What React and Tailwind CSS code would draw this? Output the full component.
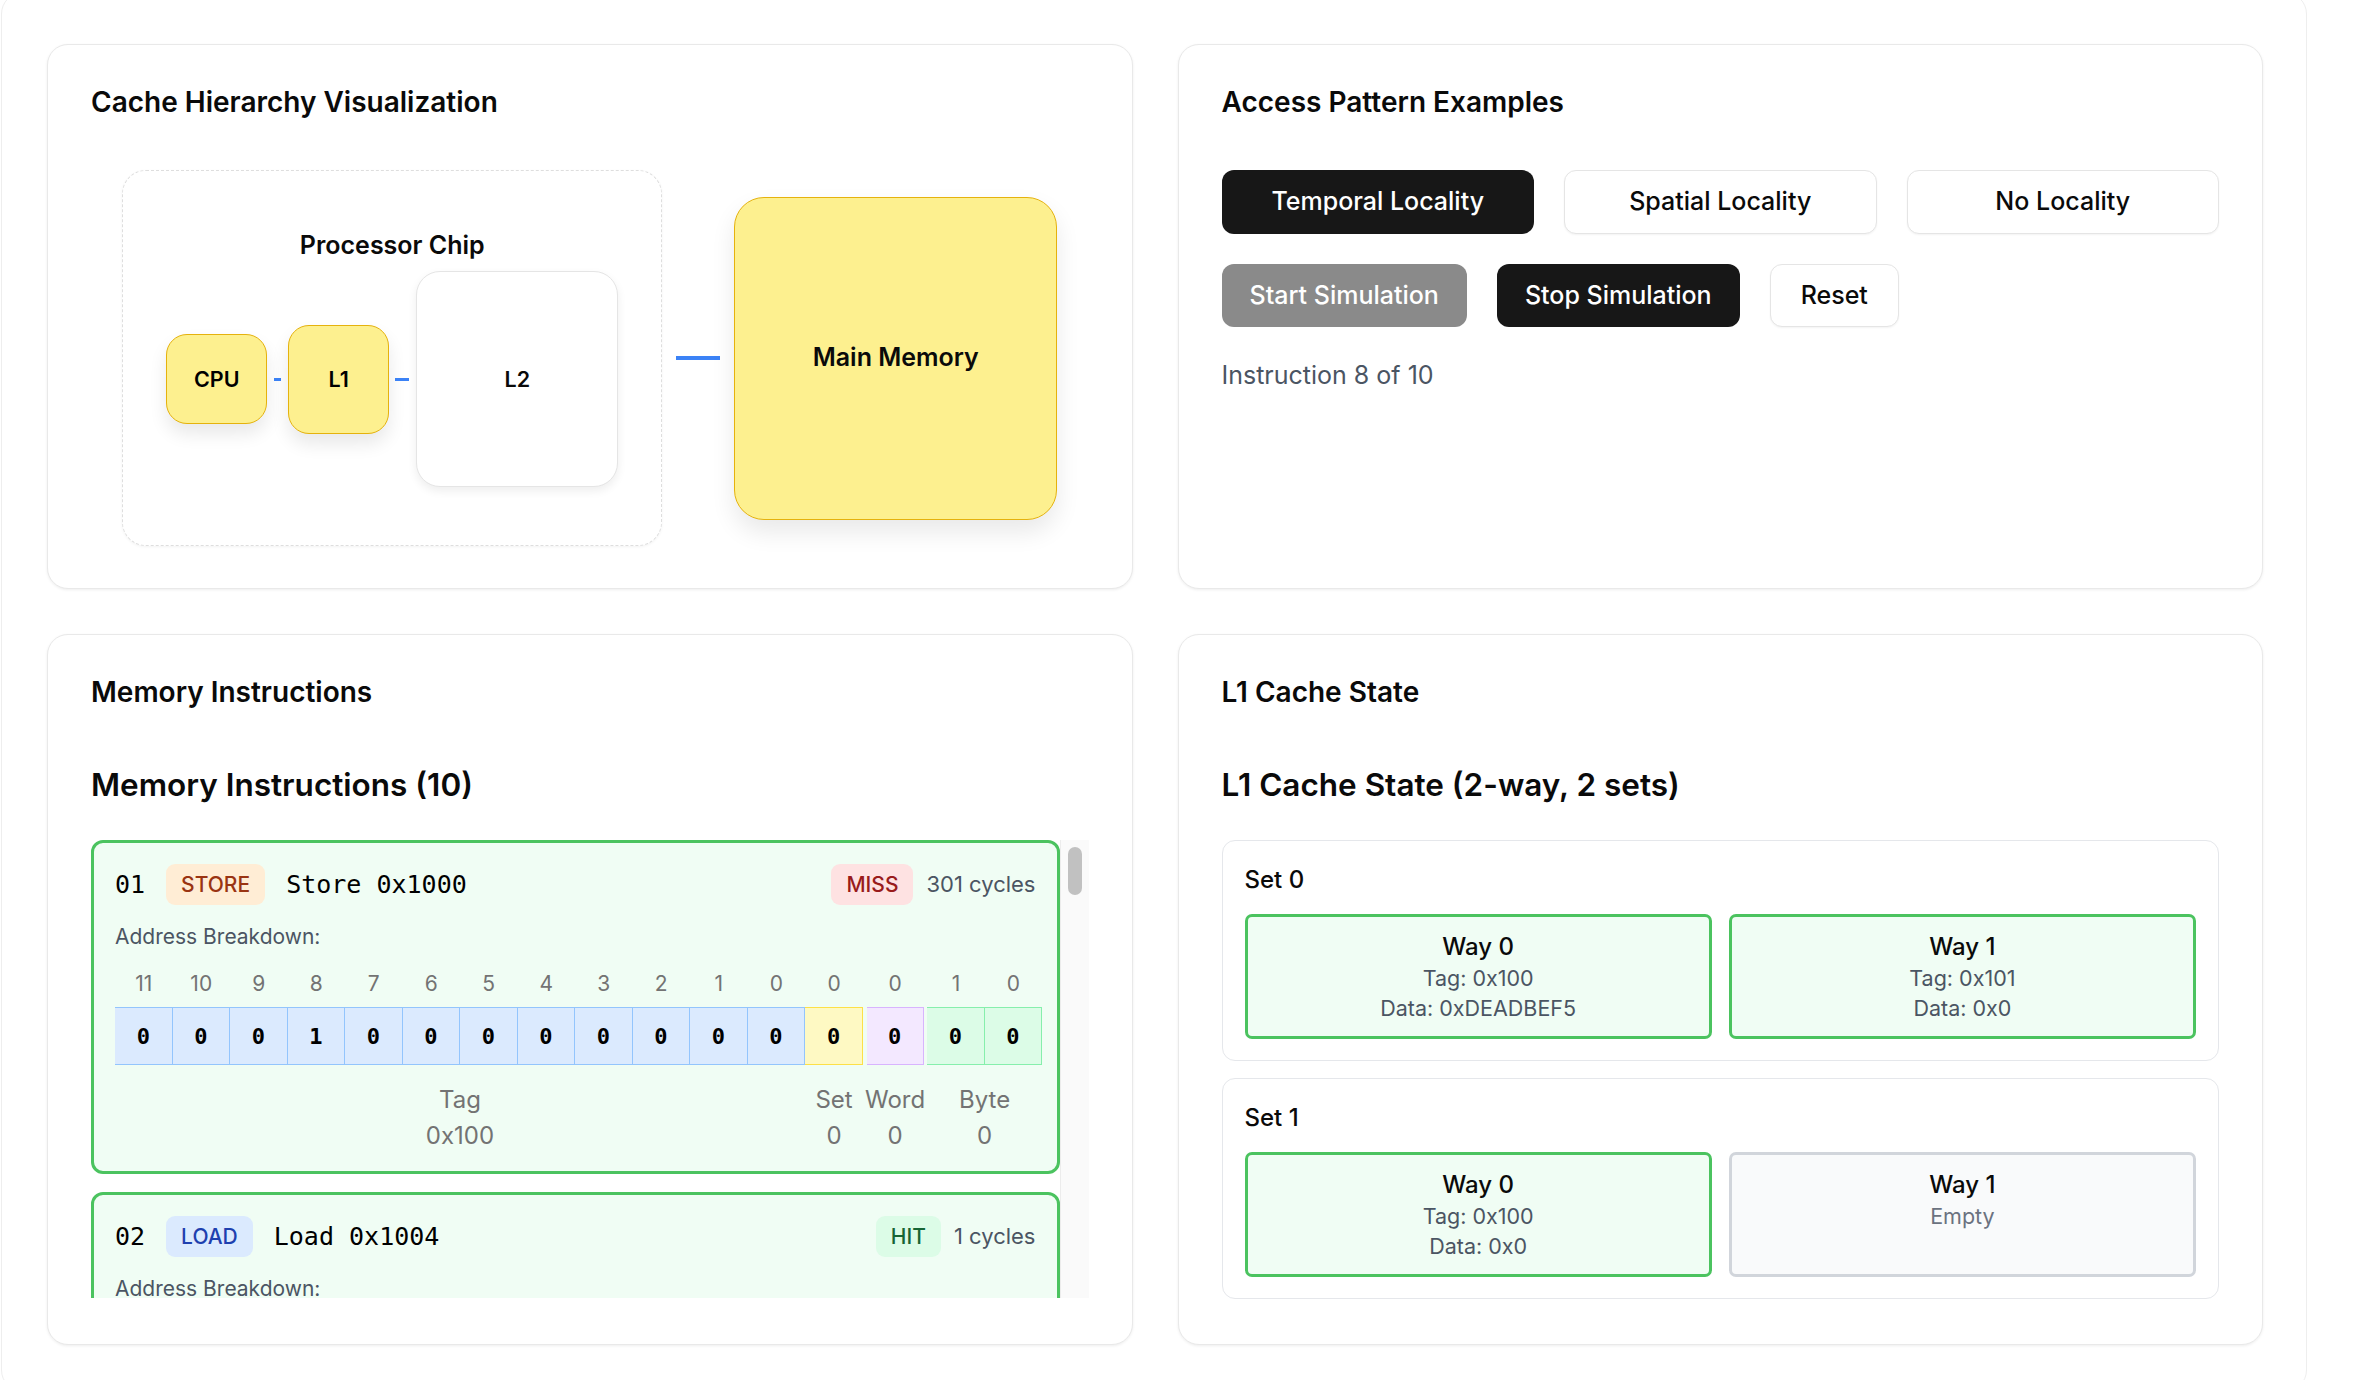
import React from 'react'

// 16-bit addresses: tag 12 bits | set 1 | word 1 | byte 2
const INSTRUCTIONS = [
  { op: 'STORE', addr: 0x1000, result: 'MISS', cycles: 301, done: true },
  { op: 'LOAD', addr: 0x1004, result: 'HIT', cycles: 1, done: true },
  { op: 'LOAD', addr: 0x1000, result: 'HIT', cycles: 1, done: true },
  { op: 'STORE', addr: 0x1008, result: 'MISS', cycles: 301, done: true },
  { op: 'LOAD', addr: 0x1010, result: 'MISS', cycles: 301, done: true },
  { op: 'LOAD', addr: 0x1000, result: 'HIT', cycles: 1, done: true },
  { op: 'LOAD', addr: 0x100c, result: 'HIT', cycles: 1, done: true },
  { op: 'STORE', addr: 0x1000, result: 'HIT', cycles: 1, done: true },
  { op: 'LOAD', addr: 0x1004, result: null, cycles: null, done: false },
  { op: 'LOAD', addr: 0x1008, result: null, cycles: null, done: false },
]

const OP_STYLE = {
  STORE: 'bg-[#ffedd5] text-[#9a3412]',
  LOAD: 'bg-[#dbeafe] text-[#1e40af]',
}

const RESULT_STYLE = {
  MISS: 'bg-[#fee2e2] text-[#991b1b]',
  HIT: 'bg-[#dcfce7] text-[#166534]',
}

const GROUP_STYLE = {
  tag: 'bg-[#dbeafe] border-[#93c5fd]',
  set: 'bg-[#fef9c3] border-[#fde047]',
  word: 'bg-[#f3e8ff] border-[#d8b4fe]',
  byte: 'bg-[#dcfce7] border-[#86efac]',
}

const SETS = [
  {
    name: 'Set 0',
    ways: [
      { name: 'Way 0', tag: '0x100', data: '0xDEADBEF5' },
      { name: 'Way 1', tag: '0x101', data: '0x0' },
    ],
  },
  {
    name: 'Set 1',
    ways: [
      { name: 'Way 0', tag: '0x100', data: '0x0' },
      { name: 'Way 1', empty: true },
    ],
  },
]

function bitsOf(value, count) {
  const out = []
  for (let i = count - 1; i >= 0; i--) out.push({ idx: i, bit: (value >> i) & 1 })
  return out
}

function Card({ title, pb = 'pb-[42px]', children }) {
  return (
    <div className={`rounded-[21px] border border-[#e9e9e9] bg-white px-[43px] pt-[36px] shadow-[0_1px_3px_rgba(0,0,0,0.07)] ${pb}`}>
      <h2 className="text-[28px] font-semibold leading-[42px] text-[#0a0a0a]">{title}</h2>
      {children}
    </div>
  )
}

function BitGroup({ kind, label, value, bits, width, className = '' }) {
  return (
    <div className={`flex flex-col items-center ${className}`}>
      <div className="flex">
        {bits.map((b, i) => (
          <div key={i} className="flex flex-col items-center" style={{ width }}>
            <div className="mb-[8px] text-[21px] leading-[30px] text-[#737373]">{b.idx}</div>
            <div className={`flex h-[58px] w-full items-center justify-center border border-l-0 first:border-l ${GROUP_STYLE[kind]}`}>
              <span className="font-['DejaVu_Sans_Mono',monospace] text-[22px] font-bold text-black">{b.bit}</span>
            </div>
          </div>
        ))}
      </div>
      <div className="mt-[17px] text-[24px] leading-[36px] text-[#737373]">{label}</div>
      <div className="text-[24px] leading-[36px] text-[#737373]">{value}</div>
    </div>
  )
}

function InstructionCard({ n, ins }) {
  const tag = ins.addr >> 4
  const set = (ins.addr >> 3) & 1
  const word = (ins.addr >> 2) & 1
  const byte = ins.addr & 3
  const name = ins.op === 'STORE' ? 'Store' : 'Load'
  return (
    <div className={`rounded-[12px] border-[3px] px-[21px] pt-[21px] pb-[17px] ${ins.done ? 'border-[#4bc35f] bg-[#f0fdf4]' : 'border-[#e5e7eb] bg-white'}`}>
      <div className="flex h-[41px] items-center justify-between">
        <div className="flex items-center gap-[21px]">
          <span className="font-['DejaVu_Sans_Mono',monospace] text-[25px] text-black">{String(n).padStart(2, '0')}</span>
          <span className={`flex h-[41px] items-center rounded-[9px] px-[15px] text-[21px] font-medium ${OP_STYLE[ins.op]}`}>{ins.op}</span>
          <span className="font-['DejaVu_Sans_Mono',monospace] text-[25px] text-black">
            {name} 0x{ins.addr.toString(16)}
          </span>
        </div>
        {ins.result && (
          <div className="flex items-center gap-[13px]">
            <span className={`flex h-[41px] items-center rounded-[9px] px-[15px] text-[21px] font-medium ${RESULT_STYLE[ins.result]}`}>{ins.result}</span>
            <span className="text-[22px] text-[#4b5563]">{ins.cycles} cycles</span>
          </div>
        )}
      </div>
      <div className="mt-[17px] mb-[17px] text-[21px] leading-[30px] text-[#4b5563]">Address Breakdown:</div>
      <div className="flex">
        <BitGroup kind="tag" label="Tag" value={'0x' + tag.toString(16)} bits={bitsOf(tag, 12)} width="57.5px" />
        <BitGroup kind="set" label="Set" value={set} bits={bitsOf(set, 1)} width="58px" />
        <BitGroup kind="word" label="Word" value={word} bits={bitsOf(word, 1)} width="57px" className="ml-[2px]" />
        <BitGroup kind="byte" label="Byte" value={byte} bits={bitsOf(byte, 2)} width="57.5px" className="ml-[2px]" />
      </div>
    </div>
  )
}

function ChipBox({ label, className }) {
  return (
    <div className={`flex items-center justify-center rounded-[21px] border border-[#e5b20d] bg-[#fdf08f] text-[21.5px] font-semibold text-black shadow-[0_10px_18px_rgba(0,0,0,0.09)] ${className}`}>
      {label}
    </div>
  )
}

export default function App() {
  return (
    <div className="min-h-screen bg-white font-[Inter,'Noto_Sans',sans-serif] text-[#0a0a0a]">
      <div className="-mt-[8px] ml-[1px] min-h-[1400px] w-[2306px] rounded-[22px] border border-[#eeeeee] bg-white pt-[51px] pr-[43px] pl-[45px]">
        <div className="grid grid-cols-2 gap-[45px]">
          {/* Cache hierarchy */}
          <Card title="Cache Hierarchy Visualization">
            <div className="mt-[47px] flex h-[376px] items-center justify-center gap-[14px]">
              <div className="flex h-[376px] w-[540px] flex-col items-center justify-center rounded-[24px] border border-dashed border-[#dedede] bg-white pb-[2px] shadow-[0_1px_3px_rgba(0,0,0,0.05)]">
                <div className="mb-[8px] text-[25px] font-semibold leading-[36px]">Processor Chip</div>
                <div className="flex items-center">
                  <ChipBox label="CPU" className="h-[90px] w-[101px]" />
                  <div className="mx-[7px] h-[3px] w-[7px] bg-[#3b82f6]" />
                  <ChipBox label="L1" className="h-[109px] w-[101px]" />
                  <div className="ml-[6px] mr-[7px] h-[3px] w-[14px] bg-[#3b82f6]" />
                  <div className="flex h-[216px] w-[202px] items-center justify-center rounded-[24px] border border-[#e5e5e5] bg-white text-[21.5px] font-semibold shadow-[0_4px_10px_rgba(0,0,0,0.07)]">
                    L2
                  </div>
                </div>
              </div>
              <div className="h-[4px] w-[44px] bg-[#3b82f6]" />
              <div className="flex h-[323px] w-[323px] items-center justify-center rounded-[30px] border border-[#e5b20d] bg-[#fdf08f] text-[25px] font-semibold shadow-[0_12px_24px_rgba(0,0,0,0.09)]">
                Main Memory
              </div>
            </div>
          </Card>

          {/* Access patterns */}
          <Card title="Access Pattern Examples">
            <div className="mt-[47px] grid grid-cols-3 gap-[30px]">
              <button className="h-[64px] rounded-[12px] bg-[#171717] text-[25px] font-medium text-white">Temporal Locality</button>
              <button className="h-[64px] rounded-[12px] border border-[#e5e5e5] bg-white text-[25px] font-medium shadow-[0_1px_2px_rgba(0,0,0,0.05)]">Spatial Locality</button>
              <button className="h-[64px] rounded-[12px] border border-[#e5e5e5] bg-white text-[25px] font-medium shadow-[0_1px_2px_rgba(0,0,0,0.05)]">No Locality</button>
            </div>
            <div className="mt-[30px] flex gap-[30px]">
              <button disabled className="h-[63px] rounded-[12px] bg-[#171717] px-[28px] text-[25px] font-medium text-white opacity-50">Start Simulation</button>
              <button className="h-[63px] rounded-[12px] bg-[#171717] px-[28px] text-[25px] font-medium text-white">Stop Simulation</button>
              <button className="h-[63px] rounded-[12px] border border-[#e5e5e5] bg-white px-[30px] text-[25px] font-medium shadow-[0_1px_2px_rgba(0,0,0,0.05)]">Reset</button>
            </div>
            <div className="mt-[30px] text-[25px] leading-[36px] text-[#4b5563]">Instruction 8 of 10</div>
          </Card>

          {/* Memory instructions */}
          <Card title="Memory Instructions" pb="pb-[45px]">
            <h3 className="mt-[51px] text-[31.5px] font-semibold leading-[42px]">Memory Instructions (10)</h3>
            <div className="mt-[34px] flex h-[458px]">
              <div className="min-w-0 flex-1 space-y-[18px] overflow-hidden">
                {INSTRUCTIONS.map((ins, i) => (
                  <InstructionCard key={i} n={i + 1} ins={ins} />
                ))}
              </div>
              {/* scrollbar */}
              <div className="w-[29px] border-l border-[#ececec] bg-[#fafafa] px-[7px] pt-[7px]">
                <div className="h-[48px] w-full rounded-full bg-[#c1c1c1]" />
              </div>
            </div>
          </Card>

          {/* L1 cache state */}
          <Card title="L1 Cache State" pb="pb-[45px]">
            <h3 className="mt-[51px] text-[31.5px] font-semibold leading-[42px]">L1 Cache State (2-way, 2 sets)</h3>
            <div className="mt-[34px] space-y-[17px]">
              {SETS.map(set => (
                <div key={set.name} className="rounded-[13px] border border-[#e5e7eb] px-[22px] pt-[22px] pb-[21px]">
                  <div className="mb-[18px] text-[24px] font-medium leading-[33px]">{set.name}</div>
                  <div className="grid grid-cols-2 gap-[17px]">
                    {set.ways.map(way => (
                      <div key={way.name}
                        className={`rounded-[7px] border-[3px] py-[13px] text-center ${way.empty ? 'border-[#d1d5db] bg-[#f9fafb]' : 'border-[#4bc35f] bg-[#f0fdf4]'}`}>
                        <div className="text-[24px] font-medium leading-[33px]">{way.name}</div>
                        {way.empty ? (
                          <div className="text-[21.5px] leading-[30px] text-[#6b7280]">Empty</div>
                        ) : (
                          <>
                            <div className="text-[21.5px] leading-[30px] text-[#4b5563]">Tag: {way.tag}</div>
                            <div className="text-[21.5px] leading-[30px] text-[#4b5563]">Data: {way.data}</div>
                          </>
                        )}
                      </div>
                    ))}
                  </div>
                </div>
              ))}
            </div>
          </Card>
        </div>
      </div>
    </div>
  )
}
